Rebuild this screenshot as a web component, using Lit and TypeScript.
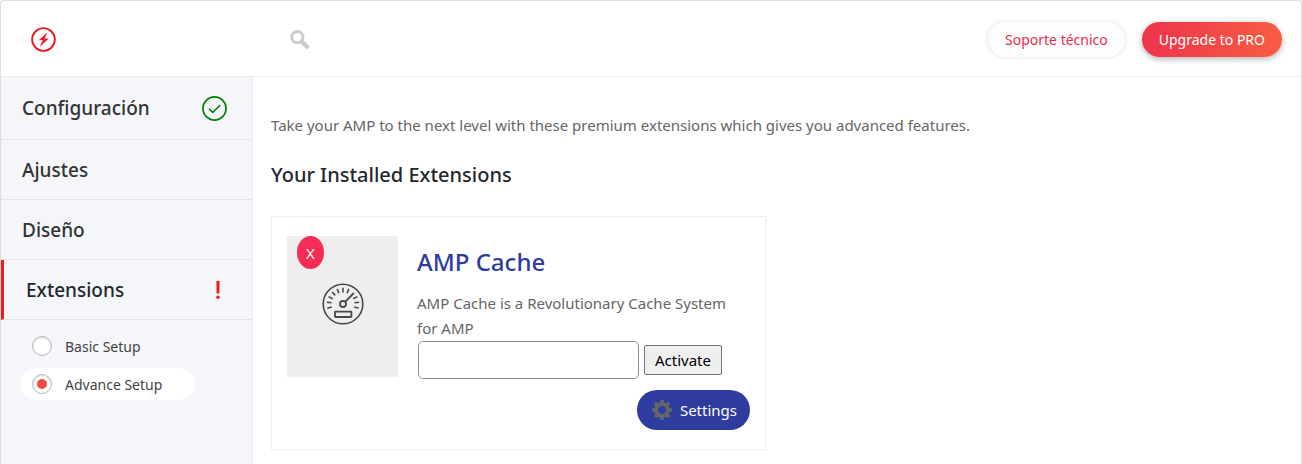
import { LitElement, html, css, svg, nothing } from "lit";
import { customElement, state } from "lit/decorators.js";

interface Section {
  title: string;
  status?: "done" | "alert";
  active?: boolean;
}

const SECTIONS: Section[] = [
  { title: "Configuración", status: "done" },
  { title: "Ajustes" },
  { title: "Diseño" },
  { title: "Extensions", status: "alert", active: true },
];

const MODES = ["Basic Setup", "Advance Setup"];

const TICK_ANGLES = [-105, -84, -63, -42, -21, 0, 21, 63, 84, 105];
const TOOTH_ANGLES = [0, 45, 90, 135, 180, 225, 270, 315];

@customElement("app-root")
export class AppRoot extends LitElement {
  @state() private mode = "Advance Setup";

  static styles = css`
    :host {
      display: block;
      font-family: "Noto Sans", "Open Sans", sans-serif;
      font-size: 15px;
      color: #666;
    }
    * {
      box-sizing: border-box;
    }
    h2, h3, p {
      margin: 0;
    }
    a {
      color: inherit;
      text-decoration: none;
    }
    button, input {
      font: inherit;
      margin: 0;
    }
    svg {
      display: block;
      flex: none;
    }
    .panel {
      display: flex;
      flex-direction: column;
      min-height: 100vh;
      border: 1px solid #ddd;
      border-bottom: 0;
      border-radius: 4px 4px 0 0;
      background: #fff;
      overflow: hidden;
    }
    .header {
      display: flex;
      align-items: center;
      height: 76px;
      padding: 2px 19px 0 30px;
      border-bottom: 1px solid #eee;
    }
    .brand {
      width: 258px;
    }
    .search {
      display: flex;
      padding: 0;
      border: 0;
      background: none;
      cursor: pointer;
    }
    .actions {
      display: flex;
      gap: 17px;
      margin-left: auto;
    }
    .pill {
      display: block;
      padding: 0 17px;
      border-radius: 40px;
      line-height: 35px;
      font-size: 14px;
      white-space: nowrap;
    }
    .support {
      color: #e6304b;
      background: #fdfdfd;
      box-shadow: 0 0 5px #ddd;
    }
    .upgrade {
      color: #fff;
      background: linear-gradient(to right, #ee344c, #f75d41);
      box-shadow: 0 2px 6px rgba(0, 0, 0, 0.3);
    }
    .body {
      display: grid;
      grid-template-columns: 252px 1fr;
      flex: 1;
    }
    .sidebar {
      background: #f4f6fa;
      border-right: 1px solid #e9ebee;
    }
    .section {
      display: flex;
      align-items: center;
      justify-content: space-between;
      height: 60px;
      padding: 0 25px 0 21px;
      border-bottom: 1px solid #e2e4e7;
      font-size: 19px;
      font-weight: 500;
      color: #333;
    }
    .section:first-child {
      height: 63px;
    }
    .section.active {
      border-left: 3px solid #ed1c24;
      padding-left: 22px;
      padding-right: 31px;
      color: #23282d;
    }
    .modes {
      display: grid;
      gap: 6px;
      margin: 0;
      padding: 10px 19px;
      border: 0;
    }
    .mode {
      display: flex;
      align-items: center;
      gap: 13px;
      width: 175px;
      height: 32px;
      padding: 0 12px;
      border-radius: 40px;
      font-size: 14px;
      color: #444;
    }
    .mode.selected {
      background: #fff;
    }
    .radio {
      appearance: none;
      display: grid;
      place-items: center;
      width: 20px;
      height: 20px;
      border: 1px solid #b4b9be;
      border-radius: 50%;
      background: #fff;
      box-shadow: inset 0 1px 2px rgba(0, 0, 0, 0.15);
    }
    .radio:checked::before {
      content: "";
      width: 10px;
      height: 10px;
      border-radius: 50%;
      background: #f24a43;
    }
    .main {
      padding: 36px 18px 14px;
    }
    .intro {
      line-height: 24px;
    }
    .heading {
      margin-top: 24px;
      line-height: 28px;
      font-size: 20px;
      font-weight: 500;
      color: #23282d;
    }
    .card {
      display: grid;
      grid-template-columns: 111px 1fr;
      gap: 19px;
      max-width: 495px;
      margin-top: 27px;
      padding: 19px 15px;
      border: 1px solid #eee;
    }
    .thumb {
      position: relative;
      display: grid;
      place-items: center;
      height: 141px;
      padding-bottom: 5px;
      background: #eee;
    }
    .remove {
      position: absolute;
      top: 0;
      left: 10px;
      width: 27px;
      height: 33px;
      padding: 0;
      border: 0;
      border-radius: 50%;
      background: #f52c56;
      color: #fff;
    }
    .name {
      margin-top: 8px;
      line-height: 36px;
      font-size: 24px;
      font-weight: 500;
      color: #2f3c9f;
    }
    .about {
      margin-top: 11px;
      line-height: 25px;
    }
    .license {
      display: flex;
      align-items: center;
      gap: 5px;
      padding-left: 1px;
    }
    .key {
      width: 221px;
      height: 38px;
      padding: 0 8px;
      border: 1px solid #8c8f94;
      border-radius: 5px;
      background: #fff;
    }
    .activate {
      height: 30px;
      padding: 0 10px;
      border: 1px solid #767676;
      border-radius: 2px;
      background: #efefef;
      color: #000;
    }
    .settings {
      display: flex;
      align-items: center;
      gap: 8px;
      width: fit-content;
      height: 40px;
      margin: 11px 0 0 auto;
      padding: 0 13px 0 15px;
      border-radius: 40px;
      background: #2f3c9f;
      color: #fff;
    }
  `;

  private boltIcon() {
    return html`<svg width="25" height="25" viewBox="0 0 26 26" aria-hidden="true">
      <circle cx="13" cy="13" r="11.8" fill="none" stroke="#ed1c24" stroke-width="2" />
      <path d="M17.4 5.4 8 13.8h4.2L9 20.8l9.4-8.8h-4.2z" fill="#ed1c24" />
    </svg>`;
  }

  private searchIcon() {
    return html`<svg width="21" height="21" viewBox="0 0 21 21" aria-hidden="true">
      <circle cx="8.4" cy="8.2" r="5.6" fill="none" stroke="#ccc" stroke-width="3" />
      <path d="M12.6 12.4 18 17.6" stroke="#ccc" stroke-width="4.4" stroke-linecap="round" />
    </svg>`;
  }

  private statusIcon(status: Section["status"]) {
    if (status === "done") {
      return html`<svg width="25" height="25" viewBox="0 0 26 26" role="img" aria-label="Done">
        <circle cx="13" cy="13" r="12" fill="none" stroke="#008000" stroke-width="1.8" />
        <path d="M7.2 13.2 11.2 17 19 9.4" fill="none" stroke="#008000" stroke-width="1.6" />
      </svg>`;
    }
    if (status === "alert") {
      return html`<svg width="6" height="20" viewBox="0 0 6 20" role="img" aria-label="Attention">
        <path d="M1.4 1h3.2L4.4 13.6H1.6z" fill="#ed1c24" />
        <circle cx="3" cy="17.3" r="1.8" fill="#ed1c24" />
      </svg>`;
    }
    return nothing;
  }

  private gaugeIcon() {
    return html`<svg width="42" height="42" viewBox="0 0 42 42" aria-hidden="true"
      fill="none" stroke="#484848" stroke-width="1.6">
      <circle cx="21" cy="21" r="19.8" />
      ${TICK_ANGLES.map((a) => svg`<path d="M21 4.8V9.4" transform="rotate(${a} 21 21)" />`)}
      <circle cx="21" cy="21" r="3" stroke-width="1.8" />
      <path d="M23.2 18.8 31.8 10" stroke-width="1.8" />
      <rect x="13" y="28.6" width="16.4" height="5.4" rx="0.5" stroke-width="1.8" />
    </svg>`;
  }

  private gearIcon() {
    return html`<svg width="20" height="20" viewBox="0 0 20 20" aria-hidden="true">
      <circle cx="10" cy="10" r="5.8" fill="none" stroke="#666" stroke-width="3.8" />
      ${TOOTH_ANGLES.map(
        (a) => svg`<path d="M8.4 0h3.2l.6 4H7.8z" fill="#666" transform="rotate(${a} 10 10)" />`
      )}
    </svg>`;
  }

  render() {
    return html`
      <div class="panel">
        <header class="header">
          <a class="brand" href="#" aria-label="AMP">${this.boltIcon()}</a>
          <button class="search" type="button" aria-label="Search">${this.searchIcon()}</button>
          <div class="actions">
            <a class="pill support" href="#">Soporte técnico</a>
            <a class="pill upgrade" href="#">Upgrade to PRO</a>
          </div>
        </header>
        <div class="body">
          <nav class="sidebar">
            ${SECTIONS.map(
              (s) => html`<a class="section ${s.active ? "active" : ""}" href="#">
                <span>${s.title}</span>${this.statusIcon(s.status)}
              </a>`
            )}
            <fieldset class="modes">
              ${MODES.map(
                (m) => html`<label class="mode ${m === this.mode ? "selected" : ""}">
                  <input class="radio" type="radio" name="mode" .checked=${m === this.mode}
                    @change=${() => (this.mode = m)} />
                  <span>${m}</span>
                </label>`
              )}
            </fieldset>
          </nav>
          <main class="main">
            <p class="intro">Take your AMP to the next level with these premium extensions which gives you advanced features.</p>
            <h2 class="heading">Your Installed Extensions</h2>
            <article class="card">
              <div class="thumb">
                ${this.gaugeIcon()}
                <button class="remove" type="button">X</button>
              </div>
              <div>
                <h3 class="name">AMP Cache</h3>
                <p class="about">AMP Cache is a Revolutionary Cache System for AMP</p>
                <form class="license" @submit=${(e: Event) => e.preventDefault()}>
                  <input class="key" type="text" aria-label="License key" />
                  <button class="activate" type="submit">Activate</button>
                </form>
                <a class="settings" href="#">${this.gearIcon()}<span>Settings</span></a>
              </div>
            </article>
          </main>
        </div>
      </div>
    `;
  }
}
